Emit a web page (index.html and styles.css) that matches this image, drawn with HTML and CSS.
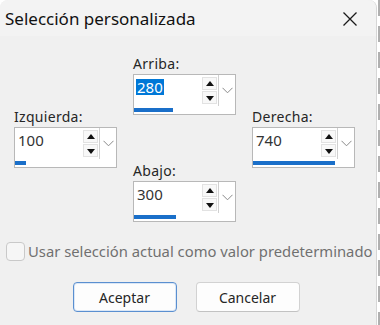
FILE: index.html
```html
<!DOCTYPE html>
<html lang="es">
  <head>
    <meta charset="UTF-8" />
    <meta name="viewport" content="width=device-width, initial-scale=1.0" />
    <title>Selección personalizada</title>
    <link rel="stylesheet" href="styles.css">
  </head>
  <body>
    <div class="dialog">
      <header class="title-bar">
        <span class="title">Selección personalizada</span>
        <a href="javascript:void(0)" class="close-btn">
          <svg width="16" height="16" viewBox="0 0 16 16">
            <path d="M1.5 1.5 L14.5 14.5 M14.5 1.5 L1.5 14.5" stroke="#1a1a1a" stroke-width="1.3" fill="none" />
          </svg>
        </a>
      </header>

      <div class="content">
        <div class="fields">
          <!-- izquierda -->
          <div class="col side">
            <div class="field">
              <label>Izquierda:</label>
              <div class="spin">
                <div class="spin-main">
                  <span class="val">100</span>
                  <div class="arrows">
                    <span class="arrow up"></span>
                    <span class="arrow down"></span>
                  </div>
                  <div class="drop">
                    <svg width="11" height="7" viewBox="0 0 11 7"><path d="M0.5 0.8 L5.5 5.8 L10.5 0.8" stroke="#8a8a8a" fill="none" /></svg>
                  </div>
                </div>
                <div class="bar"><div class="fill" style="width: 11%"></div></div>
              </div>
            </div>
          </div>

          <!-- arriba / abajo -->
          <div class="col middle">
            <div class="field">
              <label>Arriba:</label>
              <div class="spin">
                <div class="spin-main">
                  <span class="val selected">280</span>
                  <div class="arrows">
                    <span class="arrow up"></span>
                    <span class="arrow down"></span>
                  </div>
                  <div class="drop">
                    <svg width="11" height="7" viewBox="0 0 11 7"><path d="M0.5 0.8 L5.5 5.8 L10.5 0.8" stroke="#8a8a8a" fill="none" /></svg>
                  </div>
                </div>
                <div class="bar"><div class="fill" style="width: 39%"></div></div>
              </div>
            </div>
            <div class="field">
              <label>Abajo:</label>
              <div class="spin">
                <div class="spin-main">
                  <span class="val">300</span>
                  <div class="arrows">
                    <span class="arrow up"></span>
                    <span class="arrow down"></span>
                  </div>
                  <div class="drop">
                    <svg width="11" height="7" viewBox="0 0 11 7"><path d="M0.5 0.8 L5.5 5.8 L10.5 0.8" stroke="#8a8a8a" fill="none" /></svg>
                  </div>
                </div>
                <div class="bar"><div class="fill" style="width: 42%"></div></div>
              </div>
            </div>
          </div>

          <!-- derecha -->
          <div class="col side">
            <div class="field">
              <label>Derecha:</label>
              <div class="spin">
                <div class="spin-main">
                  <span class="val">740</span>
                  <div class="arrows">
                    <span class="arrow up"></span>
                    <span class="arrow down"></span>
                  </div>
                  <div class="drop">
                    <svg width="11" height="7" viewBox="0 0 11 7"><path d="M0.5 0.8 L5.5 5.8 L10.5 0.8" stroke="#8a8a8a" fill="none" /></svg>
                  </div>
                </div>
                <div class="bar"><div class="fill" style="width: 81%"></div></div>
              </div>
            </div>
          </div>
        </div>

        <div class="check-row">
          <span class="checkbox"></span>
          <span class="check-label">Usar selección actual como valor predeterminado</span>
        </div>

        <div class="buttons">
          <a href="javascript:void(0)" class="btn primary">Aceptar</a>
          <a href="javascript:void(0)" class="btn">Cancelar</a>
        </div>
      </div>
    </div>
    <div class="edge"></div>
  </body>
</html>
```

FILE: styles.css
```css
body {
  margin: 0;
  height: 325px;
  display: flex;
  background-color: #ffffff;
  font-family: "Noto Sans", "Open Sans", sans-serif;
  color: #1b1b1b;
  overflow: hidden;
}
.dialog {
  width: 376px;
  flex-shrink: 0;
  background-color: #f0f0f0;
  border-radius: 8px 8px 0 0;
  border-right: 1px solid #d6d6d6;
  display: flex;
  flex-direction: column;
}
.edge {
  width: 2px;
  margin-left: 1px;
  background: repeating-linear-gradient(
    to bottom,
    #b0b0b0 0,
    #b0b0b0 16px,
    transparent 16px,
    transparent 26px
  );
}

/* title */
.title-bar {
  height: 36px;
  display: flex;
  align-items: center;
  justify-content: space-between;
  padding: 0 18px 0 5px;
  background-color: #f3f3f3;
  border-radius: 8px 8px 0 0;
}
.title {
  font-size: 17px;
  color: #111;
}
.close-btn {
  display: flex;
  margin-top: 1px;
}

/* fields */
.content {
  flex: 1;
  display: flex;
  flex-direction: column;
}
.fields {
  display: grid;
  grid-template-columns: 103px 103px 103px;
  column-gap: 16px;
  padding: 18px 0 0 14px;
}
.col {
  display: flex;
  flex-direction: column;
}
.col.side {
  justify-content: center;
  padding-bottom: 2px;
}
.col.middle {
  gap: 46px;
}
.field label {
  display: block;
  height: 20px;
  line-height: 20px;
  font-size: 14px;
  letter-spacing: 0.3px;
  color: #262626;
}
.spin {
  height: 41px;
  box-sizing: border-box;
  border: 1px solid #b8b8b8;
  background-color: #ffffff;
  display: flex;
  flex-direction: column;
}
.spin-main {
  height: 33px;
  display: flex;
}
.val {
  flex: 1;
  padding: 4px 0 0 3px;
  font-size: 15px;
  line-height: 16px;
  color: #333333;
}
.val.selected {
  align-self: flex-start;
  flex: 0 0 auto;
  margin: 4px 0 0 2px;
  padding: 0 1px;
  background-color: #0078d7;
  color: #ffffff;
}
.spin-main .val.selected + .arrows {
  margin-left: auto;
}
.arrows {
  width: 15px;
  display: flex;
  flex-direction: column;
  justify-content: space-between;
  padding: 2px 0;
  margin-right: 1px;
}
.arrow {
  height: 13px;
  box-sizing: border-box;
  border: 1px solid #e2e2e2;
  background-color: #f8f8f8;
  position: relative;
}
.arrow::after {
  content: "";
  position: absolute;
  left: 3px;
  border-left: 4px solid transparent;
  border-right: 4px solid transparent;
}
.arrow.up::after {
  top: 3px;
  border-bottom: 5px solid #111;
}
.arrow.down::after {
  top: 4px;
  border-top: 5px solid #111;
}
.drop {
  width: 16px;
  border-left: 1px solid #d0d0d0;
  display: flex;
  align-items: center;
  justify-content: center;
}
.bar {
  flex: 1;
  padding: 2px 0;
  display: flex;
  background-color: #ffffff;
}
.fill {
  height: 4px;
  background-color: #1a6fc9;
}

/* checkbox */
.check-row {
  display: flex;
  align-items: center;
  margin: 19px 0 0 6px;
  gap: 3px;
}
.checkbox {
  width: 19px;
  height: 19px;
  flex-shrink: 0;
  box-sizing: border-box;
  border: 1px solid #c9c9c9;
  border-radius: 4px;
  background-color: #f6f6f6;
}
.check-label {
  font-size: 14.8px;
  line-height: 20px;
  white-space: nowrap;
  color: #707070;
}

/* buttons */
.buttons {
  display: flex;
  justify-content: center;
  gap: 19px;
  margin-top: 21px;
  padding-right: 4px;
}
.btn {
  width: 104px;
  height: 30px;
  box-sizing: border-box;
  border: 1px solid #d2d2d2;
  border-bottom-color: #c2c2c2;
  border-radius: 4px;
  background-color: #fdfdfd;
  display: flex;
  align-items: center;
  justify-content: center;
  font-size: 14px;
  color: #262626;
  text-decoration: none;
}
.btn.primary {
  border: 1px solid #5a8fd0;
  box-shadow: inset 0 0 0 1px #dbe7f6;
}
```
